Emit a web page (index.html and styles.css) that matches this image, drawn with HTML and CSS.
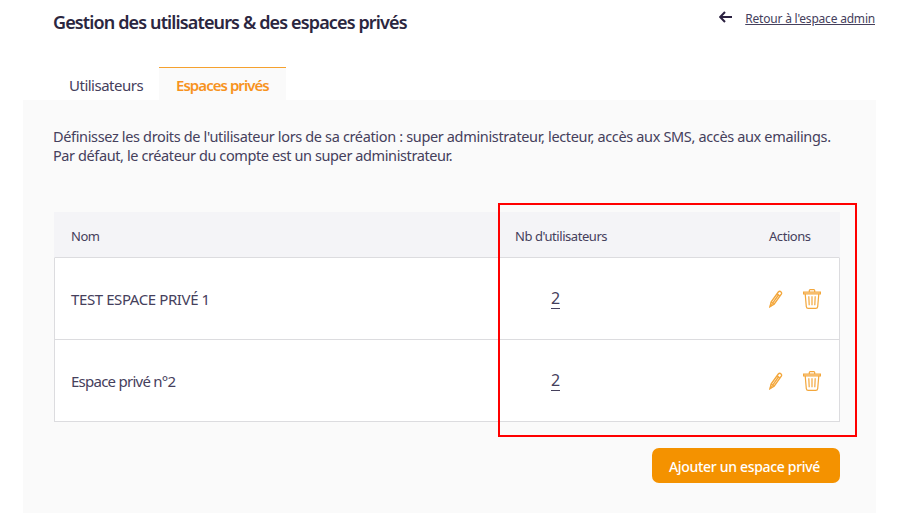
FILE: index.html
```html
<!DOCTYPE html>
<html lang="fr">
  <head>
    <meta charset="UTF-8" />
    <meta name="viewport" content="width=device-width, initial-scale=1.0" />
    <title>Gestion des utilisateurs</title>
    <link rel="stylesheet" href="styles.css">
  </head>

  <body>
    <svg class="sprite" width="0" height="0">
      <symbol id="pencil" viewBox="0 0 14 18">
        <path d="M1.2 16.4l.9-4.3L9.3 2q1.2-1.2 2.5-.3 1.300 1 .5 2.400L5.100 14.200z" />
        <path d="M2.100 12.100l3 2.100M8 3.900l3 2.200M9.400 5L3.700 13.100M1.200 16.400l.5-2 1 .8z" />
      </symbol>
      <symbol id="trash" viewBox="0 0 18 20">
        <path d="M.6 3.200h16.800v1.700H.6zM6.300 3.200V1.600q0-.9.900-.9h3.600q.9 0 .9.900v1.600" />
        <path d="M2.200 4.900l1.100 12.700q.2 1.700 1.900 1.700h7.600q1.700 0 1.900-1.700l1.100-12.700M5.800 7.300l.4 8.900M9 7.300v8.900M12.200 7.300l-.4 8.900" />
      </symbol>
    </svg>

    <div class="header">
      <h1 class="title">Gestion des utilisateurs &amp; des espaces privés</h1>
      <div class="back">
        <svg class="arrow" width="14" height="12" viewBox="0 0 14 12">
          <path d="M13 6H1.500M6 1L1.200 6 6 11" />
        </svg>
        <a class="back-link" href="#">Retour à l'espace admin</a>
      </div>
    </div>

    <div class="tabs">
      <a class="tab">Utilisateurs</a>
      <a class="tab active">Espaces privés</a>
    </div>

    <div class="panel">
      <p class="intro">
        <span class="line1">Définissez les droits de l'utilisateur lors de sa création : super administrateur, lecteur, accès aux SMS, accès aux emailings.</span><br />
        <span class="line2">Par défaut, le créateur du compte est un super administrateur.</span>
      </p>

      <div class="table-wrap">
        <div class="row head">
          <div class="nom">Nom</div>
          <div class="nb">Nb d'utilisateurs</div>
          <div class="actions">Actions</div>
        </div>
        <div class="row">
          <div class="nom upper">TEST ESPACE PRIVÉ 1</div>
          <div class="nb"><a class="count" href="#">2</a></div>
          <div class="actions">
            <svg class="icon pencil" width="14" height="18"><use href="#pencil" /></svg>
            <svg class="icon" width="18" height="20"><use href="#trash" /></svg>
          </div>
        </div>
        <div class="row">
          <div class="nom">Espace privé n°2</div>
          <div class="nb"><a class="count" href="#">2</a></div>
          <div class="actions">
            <svg class="icon pencil" width="14" height="18"><use href="#pencil" /></svg>
            <svg class="icon" width="18" height="20"><use href="#trash" /></svg>
          </div>
        </div>
        <div class="highlight"></div>
      </div>

      <div class="footer">
        <button class="btn">Ajouter un espace privé</button>
      </div>
    </div>
  </body>
</html>
```
FILE: styles.css
```css
* {
  box-sizing: border-box;
}

body {
  margin: 0;
  height: 513px;
  overflow: hidden;
  background: #fff;
  color: #45405c;
  font-family: "Noto Sans", "Open Sans", sans-serif;
  font-size: 15px;
  display: flex;
  flex-direction: column;
}

.sprite {
  display: none;
}

.header {
  height: 67px;
  padding: 10px 25px 0 53px;
  display: flex;
  justify-content: space-between;
  align-items: flex-start;
}

.title {
  margin: 0;
  font-size: 18px;
  line-height: 25px;
  font-weight: 600;
  letter-spacing: -0.87px;
  color: #2b2640;
  white-space: nowrap;
}

.back {
  display: flex;
  gap: 12px;
}

.arrow {
  margin-top: 1px;
  fill: none;
  stroke: #2b2140;
  stroke-width: 2;
}

.back-link {
  font-size: 12px;
  line-height: 18px;
  letter-spacing: -0.2px;
  color: #45405c;
  white-space: nowrap;
}

/* tabs */
.tabs {
  height: 33px;
  padding-left: 53px;
  display: flex;
}

.tab {
  padding: 7px 16px 0;
  width: 106px;
  border-top: 1px solid transparent;
  line-height: 20px;
  letter-spacing: -0.5px;
  white-space: nowrap;
}

.tab.active {
  width: 127px;
  padding-left: 17px;
  background: #fafafa;
  border-top-color: #f5a12e;
  color: #f7931e;
  font-weight: 600;
  letter-spacing: -0.95px;
}

/* panel */
.panel {
  flex: 1;
  margin: 0 24px 0 23px;
  padding: 27px 36px 0 31px;
  background: #fafafa;
}

.intro {
  margin: 0 0 0 -1px;
  height: 84px;
  font-size: 14.500px;
  line-height: 19px;
  letter-spacing: -0.350px;
  white-space: nowrap;
}

.line2 {
  letter-spacing: -0.400px;
}

.table-wrap {
  position: relative;
  margin-top: 1px;
}

.row {
  height: 82px;
  padding-left: 16px;
  display: grid;
  grid-template-columns: 444px 1fr 70px;
  align-items: center;
  background: #fff;
  border: 1px solid #dcdcdf;
  border-top: 0;
  letter-spacing: -0.75px;
}

.upper {
  letter-spacing: -0.400px;
}

.row.head {
  height: 46px;
  padding-top: 2px;
  background: #f4f4f7;
  border-color: #f4f4f7;
  border-bottom-color: #dcdcdf;
  font-size: 13px;
  letter-spacing: -0.450px;
}

.count {
  margin-left: 36px;
  display: inline-block;
  border-bottom: 1px solid #45405c;
  color: #45405c;
  font-size: 16px;
  line-height: 19px;
  letter-spacing: 0;
  text-decoration: none;
}

.actions {
  display: flex;
  align-items: center;
  gap: 20px;
}

.icon {
  fill: none;
  stroke: #f3a73c;
  stroke-width: 1.200;
}

.icon.pencil {
  stroke-width: 1.400;
}

/* red frame over the two right columns */
.highlight {
  position: absolute;
  top: -9px;
  left: 444px;
  width: 359px;
  height: 234px;
  border: 2px solid #ff0000;
}

.footer {
  padding-top: 26px;
  display: flex;
  justify-content: flex-end;
}

.btn {
  width: 188px;
  height: 35px;
  padding: 2px 3px 0 0;
  border: 0;
  border-radius: 7px;
  background: #f49200;
  color: #fff;
  font-family: inherit;
  font-size: 14px;
  font-weight: 500;
  letter-spacing: -0.320px;
  white-space: nowrap;
}
```
